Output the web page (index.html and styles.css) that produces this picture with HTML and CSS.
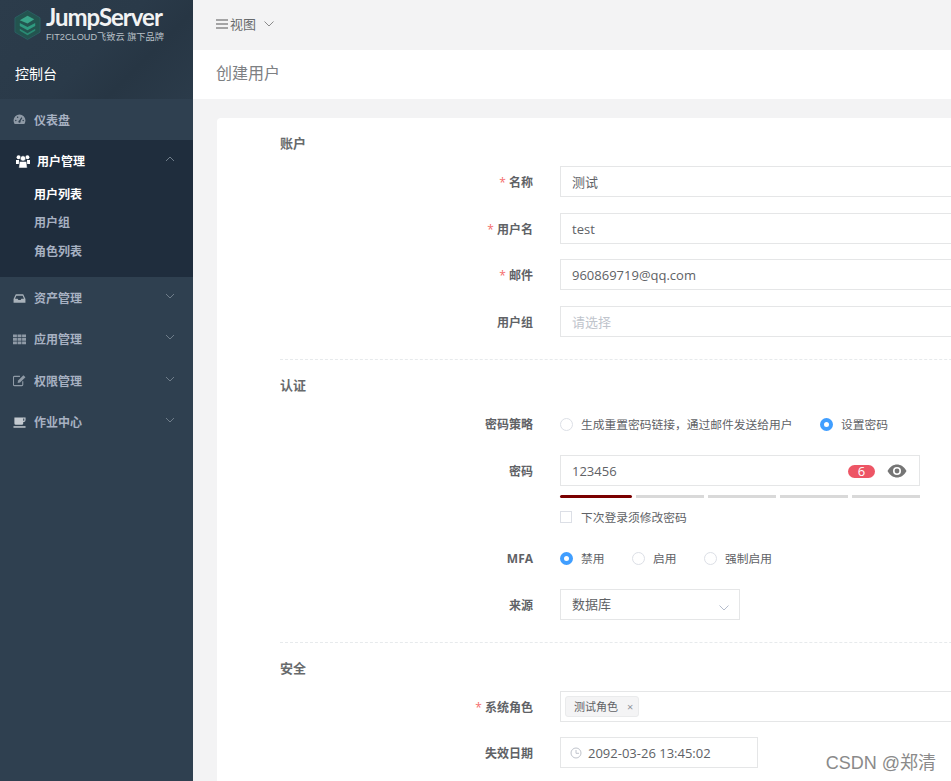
FILE: index.html
```html
<!DOCTYPE html>
<html>
<head>
    <title>创建用户</title>
    <link rel="stylesheet" href="styles.css">
</head>
<body>
    <div class="app">
        <aside class="sidebar">
            <div class="side-head">
                <div class="logo">
                    <svg class="logo-mark" viewBox="0 0 28 32" width="27" height="32">
                        <path d="M14 1 L27 8.5 V23.5 L14 31 L1 23.5 V8.5 Z" fill="#23544f" stroke="#2b5f63" stroke-width="1"/>
                        <path d="M6 11 L14 6.5 L21 10 L14 14.5 Z" fill="#3aa58a"/>
                        <path d="M6 14 L14 18 L22 14 V17 L14 21.5 L6 17 Z" fill="#2f9a80"/>
                        <path d="M6 20 L14 24.5 L22 20 V22 L14 26.5 L6 22 Z" fill="#2a8a74"/>
                    </svg>
                    <div class="logo-text">
                        <div class="logo-name">JumpServer</div>
                        <div class="logo-sub">FIT2CLOUD飞致云 旗下品牌</div>
                    </div>
                </div>
                <div class="side-title">控制台</div>
            </div>
            <div class="menu-item">
                <svg class="menu-icon" viewBox="0 0 14 14"><path d="M7 1.5 A6.4 6.4 0 0 0 .6 7.9 C.6 9.6 1.1 10.8 1.8 11.8 H12.2 C12.9 10.8 13.4 9.6 13.4 7.9 A6.4 6.4 0 0 0 7 1.5 Z" fill="#8f9aa6"/><path d="M7 9 L9.5 5" stroke="#2f4050" stroke-width="1.2"/><circle cx="7" cy="9.4" r="1.2" fill="#2f4050"/><circle cx="3" cy="8.2" r=".8" fill="#2f4050"/><circle cx="11" cy="8.2" r=".8" fill="#2f4050"/><circle cx="5" cy="4.6" r=".8" fill="#2f4050"/></svg>
                <span>仪表盘</span>
            </div>
            <div class="menu-group">
                <div class="menu-item menu-open">
                    <svg class="menu-icon users" viewBox="0 0 14 13"><circle cx="2.6" cy="2.2" r="2" fill="#fff"/><circle cx="11.4" cy="2.2" r="2" fill="#fff"/><path d="M0 5 H3 V9 H0 Z M14 5 H11 V9 H14 Z" fill="#fff"/><circle cx="7" cy="3.4" r="2.7" fill="#fff" stroke="#1f2d3d" stroke-width=".6"/><path d="M3.4 6.4 H10.6 L11.2 13 H2.8 Z" fill="#fff" stroke="#1f2d3d" stroke-width=".5"/></svg>
                    <span>用户管理</span>
                    <svg class="arrow" viewBox="0 0 10 6"><path d="M1 5 L5 1 L9 5" fill="none" stroke="#6f7d8a" stroke-width="1"/></svg>
                </div>
                <div class="submenu">
                    <div class="sub-item sub-active">用户列表</div>
                    <div class="sub-item">用户组</div>
                    <div class="sub-item">角色列表</div>
                </div>
            </div>
            <div class="menu-item">
                <svg class="menu-icon" viewBox="0 0 14 14"><path d="M3 2.5 H11 L13.4 7.5 V11.5 H.6 V7.5 Z" fill="#a9b2ba"/><path d="M3.6 4 H10.4 L11.8 7.3 H9 L8.2 8.6 H5.8 L5 7.3 H2.2 Z" fill="#2f4050"/></svg>
                <span>资产管理</span>
                <svg class="arrow" viewBox="0 0 10 6"><path d="M1 1 L5 5 L9 1" fill="none" stroke="#6f7d8a" stroke-width="1"/></svg>
            </div>
            <div class="menu-item">
                <svg class="menu-icon" viewBox="0 0 14 14"><path d="M0 1.5 H4.2 V4.6 H0 Z M4.9 1.5 H9.1 V4.6 H4.9 Z M9.8 1.5 H14 V4.6 H9.8 Z M0 5.4 H4.2 V8.4 H0 Z M4.9 5.4 H9.1 V8.4 H4.9 Z M9.8 5.4 H14 V8.4 H9.8 Z M0 9.2 H4.2 V12.2 H0 Z M4.9 9.2 H9.1 V12.2 H4.9 Z M9.8 9.2 H14 V12.2 H9.8 Z" fill="#8f9aa6"/></svg>
                <span>应用管理</span>
                <svg class="arrow" viewBox="0 0 10 6"><path d="M1 1 L5 5 L9 1" fill="none" stroke="#6f7d8a" stroke-width="1"/></svg>
            </div>
            <div class="menu-item">
                <svg class="menu-icon" viewBox="0 0 14 14"><path d="M10.5 7.8 V11.5 A1 1 0 0 1 9.5 12.5 H1.5 A1 1 0 0 1 .5 11.5 V3.5 A1 1 0 0 1 1.5 2.5 H7.5" fill="none" stroke="#8f9aa6" stroke-width="1.2"/><path d="M5 9.6 L5.5 7 L11.2 1.3 L13.4 3.5 L7.6 9.2 Z" fill="#8f9aa6"/></svg>
                <span>权限管理</span>
                <svg class="arrow" viewBox="0 0 10 6"><path d="M1 1 L5 5 L9 1" fill="none" stroke="#6f7d8a" stroke-width="1"/></svg>
            </div>
            <div class="menu-item">
                <svg class="menu-icon" viewBox="0 0 14 14"><path d="M1.5 1.5 H13.5 V4.2 A2.3 2.3 0 0 1 11 6.5 V8 A1.5 1.5 0 0 1 9.5 9.5 H3 A1.5 1.5 0 0 1 1.5 8 Z" fill="#c4cad0"/><path d="M11 2.8 H12.2 V5 H11 Z" fill="#2f4050"/><path d="M.5 11 H13.5 V12.6 H.5 Z" fill="#c4cad0"/></svg>
                <span>作业中心</span>
                <svg class="arrow" viewBox="0 0 10 6"><path d="M1 1 L5 5 L9 1" fill="none" stroke="#6f7d8a" stroke-width="1"/></svg>
            </div>
        </aside>
        <main class="main">
            <div class="topbar">
                <svg class="bars" viewBox="0 0 12 10" width="12" height="10"><path d="M0 1 H12 M0 5 H12 M0 9 H12" stroke="#8a8a8a" stroke-width="1.5"/></svg>
                <span>视图</span>
                <svg class="top-arrow" viewBox="0 0 10 6" width="10" height="6"><path d="M.5 .5 L5 5 L9.5 .5" fill="none" stroke="#8a8a8a" stroke-width="1"/></svg>
            </div>
            <div class="page-head">创建用户</div>
            <div class="content">
                <form class="card">
                    <h3 class="section-title">账户</h3>
                    <div class="row">
                        <label class="row-label"><em>*</em> 名称</label>
                        <div class="field"><div class="input">测试</div></div>
                    </div>
                    <div class="row">
                        <label class="row-label"><em>*</em> 用户名</label>
                        <div class="field"><div class="input">test</div></div>
                    </div>
                    <div class="row">
                        <label class="row-label"><em>*</em> 邮件</label>
                        <div class="field"><div class="input">960869719@qq.com</div></div>
                    </div>
                    <div class="row">
                        <label class="row-label">用户组</label>
                        <div class="field"><div class="input placeholder">请选择</div></div>
                    </div>
                    <div class="divider"></div>

                    <h3 class="section-title">认证</h3>
                    <div class="row row-radio">
                        <label class="row-label">密码策略</label>
                        <div class="radios">
                            <span class="radio"><i class="dot"></i>生成重置密码链接，通过邮件发送给用户</span>
                            <span class="radio"><i class="dot dot-on"></i>设置密码</span>
                        </div>
                    </div>
                    <div class="row row-password">
                        <label class="row-label">密码</label>
                        <div class="field-short">
                            <div class="input password">
                                <span>123456</span>
                                <span class="badge">6</span>
                                <svg class="eye" viewBox="0 0 20 14" width="20" height="14"><path d="M0.5 7 C3 2.5 6.5 .5 10 .5 C13.5 .5 17 2.5 19.5 7 C17 11.5 13.5 13.5 10 13.5 C6.5 13.5 3 11.5 .5 7 Z" fill="#757575"/><circle cx="10" cy="7" r="4" fill="#fff"/><circle cx="10" cy="7" r="2.4" fill="#757575"/></svg>
                            </div>
                            <div class="strength">
                                <i class="level level-on"></i><i class="level"></i><i class="level"></i><i class="level"></i><i class="level"></i>
                            </div>
                            <div class="check"><i class="box"></i>下次登录须修改密码</div>
                        </div>
                    </div>
                    <div class="row row-radio row-mfa">
                        <label class="row-label">MFA</label>
                        <div class="radios">
                            <span class="radio"><i class="dot dot-on"></i>禁用</span>
                            <span class="radio"><i class="dot"></i>启用</span>
                            <span class="radio"><i class="dot"></i>强制启用</span>
                        </div>
                    </div>
                    <div class="row">
                        <label class="row-label">来源</label>
                        <div class="input select">
                            <span>数据库</span>
                            <svg viewBox="0 0 10 6" width="10" height="6"><path d="M.5 .5 L5 5 L9.5 .5" fill="none" stroke="#b4bccc" stroke-width="1"/></svg>
                        </div>
                    </div>
                    <div class="divider"></div>

                    <h3 class="section-title">安全</h3>
                    <div class="row">
                        <label class="row-label"><em>*</em> 系统角色</label>
                        <div class="field"><div class="input tags"><span class="tag">测试角色<b>×</b></span></div></div>
                    </div>
                    <div class="row">
                        <label class="row-label">失效日期</label>
                        <div class="input date">
                            <svg viewBox="0 0 12 12" width="12" height="12"><circle cx="6" cy="6" r="5" fill="none" stroke="#c0c4cc" stroke-width="1"/><path d="M6 3 V6.3 H9" fill="none" stroke="#c0c4cc" stroke-width="1"/></svg>
                            <span>2092-03-26 13:45:02</span>
                        </div>
                    </div>
                </form>
            </div>
        </main>
    </div>
    <div class="watermark">CSDN @郑清</div>
</body>
</html>
```

FILE: styles.css
```css
html, body {
    margin: 0;
    padding: 0;
    height: 781px;
    overflow: hidden;
}
body {
    font-family: "Open Sans", "Noto Sans CJK SC", sans-serif;
    font-size: 13px;
    color: #606266;
    background: #f3f3f4;
}
.app {
    display: flex;
    height: 781px;
}

/* sidebar */
.sidebar {
    width: 193px;
    flex: none;
    background: #2f4050;
    color: #a7b1c2;
    font-weight: 600;
}
.side-head {
    height: 99px;
    box-sizing: border-box;
    padding-top: 5px;
    background: linear-gradient(135deg, #2c3c4b 0%, #2a3a49 50%, #273644 70%, #2b3b4a 100%);
}
.logo {
    display: flex;
    align-items: flex-start;
    gap: 5px;
    padding-left: 14px;
}
.logo-mark {
    flex: none;
    margin-top: 4px;
}
.logo-name {
    font-family: "Lato", sans-serif;
    font-size: 24px;
    line-height: 24px;
    font-weight: 700;
    letter-spacing: -1px;
    color: #f2f3f4;
}
.logo-sub {
    margin-top: 3px;
    font-family: "Liberation Sans", "Noto Sans CJK SC", sans-serif;
    font-size: 9.2px;
    line-height: 11px;
    font-weight: 400;
    color: #b9c0c7;
    white-space: nowrap;
}
.side-title {
    margin-top: 21px;
    padding-left: 15px;
    font-size: 14px;
    font-weight: 400;
    line-height: 20px;
    color: #fff;
}
.menu-item {
    display: flex;
    align-items: center;
    height: 41.4px;
    padding: 0 18px 0 13px;
    font-size: 12px;
}
.menu-item span {
    flex: 1;
}
.menu-icon {
    width: 13px;
    height: 13px;
    margin-right: 8px;
    flex: none;
}
.arrow {
    width: 10px;
    height: 6px;
    margin-bottom: 4px;
}
.menu-group {
    background: #1f2d3d;
    height: 137px;
}
.menu-open {
    padding-left: 16px;
    color: #fff;
}
.menu-open .users {
    width: 14px;
    height: 13px;
    margin-right: 7px;
}
.sub-item {
    height: 28.5px;
    line-height: 28px;
    padding-left: 34px;
    font-size: 12px;
}
.submenu {
    margin-top: -1px;
}
.sub-active {
    color: #fff;
}

/* main area */
.main {
    flex: 1;
    min-width: 0;
}
.topbar {
    display: flex;
    align-items: center;
    height: 50px;
    box-sizing: border-box;
    padding: 0 0 3px 23px;
    color: #676a6c;
}
.bars {
    margin-right: 2px;
}
.top-arrow {
    margin-left: 8px;
}
.page-head {
    height: 49px;
    line-height: 46px;
    padding-left: 23px;
    background: #fff;
    font-size: 16px;
    color: #7d8083;
}
.content {
    padding: 19px 0 0 24px;
}
.card {
    width: 900px;
    height: 700px;
    box-sizing: border-box;
    background: #fff;
    border-radius: 4px;
    padding: 14px 0 0 63px;
}
.section-title {
    margin: 0 0 12px;
    font-size: 13px;
    line-height: 22px;
    font-weight: 700;
    color: #676a6c;
}

/* form rows */
.row {
    display: flex;
    align-items: flex-start;
    margin-bottom: 15.7px;
}
.row-label {
    width: 253px;
    height: 31px;
    flex: none;
    margin-right: 27px;
    text-align: right;
    line-height: 33px;
    font-weight: 700;
    font-size: 12px;
    color: #606266;
}
.row-label em {
    font-style: normal;
    font-weight: 400;
    color: #f56c6c;
}
.field {
    flex: 1;
}
.field-short {
    width: 360px;
}
.input {
    height: 31px;
    box-sizing: border-box;
    border: 1px solid #e5e6e7;
    padding: 0 11px;
    line-height: 31px;
    color: #606266;
}
.placeholder {
    color: #c0c4cc;
}
.divider {
    margin: 22px 0 14px;
    border-top: 1px dashed #e7eaec;
}
.radios {
    display: flex;
    gap: 27.5px;
    height: 31px;
    box-sizing: border-box;
    padding-top: 2px;
    line-height: 29px;
    font-size: 11.75px;
}
.radio {
    display: flex;
    align-items: center;
}
.dot {
    width: 13px;
    height: 13px;
    box-sizing: border-box;
    margin-right: 8px;
    border: 1px solid #dcdfe6;
    border-radius: 50%;
}
.dot-on {
    border: 4px solid #409eff;
    background: #fff;
}
.row-radio {
    margin-bottom: 16px;
}
.row-password {
    margin-bottom: 15.7px;
}
.password {
    display: flex;
    align-items: center;
    padding-top: 1px;
}
.password span:first-child {
    flex: 1;
}
.badge {
    width: 27px;
    height: 13px;
    margin-right: 12px;
    border-radius: 7px;
    background: #ed5565;
    color: #fff;
    text-align: center;
    line-height: 13px;
}
.eye {
    margin-right: 1px;
}
.strength {
    display: flex;
    gap: 4px;
    margin-top: 9px;
}
.level {
    flex: 1;
    height: 3px;
    background: #d9d9d9;
}
.level-on {
    flex: none;
    width: 72px;
    background: #7a0000;
    border-radius: 2px;
}
.check {
    display: flex;
    align-items: center;
    margin-top: 10px;
    line-height: 18px;
    font-size: 11.75px;
}
.box {
    width: 12px;
    height: 12px;
    box-sizing: border-box;
    margin-right: 9px;
    border: 1px solid #dcdfe6;
}
.select {
    display: flex;
    align-items: center;
    justify-content: space-between;
    width: 180px;
    padding-top: 1px;
    padding-right: 10px;
}
.select svg {
    margin-top: 7px;
}
.tags {
    display: flex;
    align-items: center;
    padding-left: 4px;
}
.tag {
    height: 21px;
    padding: 0 5px 0 8px;
    line-height: 19px;
    font-size: 11px;
    background: #f4f4f5;
    border: 1px solid #eaebec;
    border-radius: 3px;
    box-sizing: border-box;
}
.tag b {
    margin-left: 9px;
    font-weight: 400;
    color: #909399;
}
.date {
    display: flex;
    align-items: center;
    gap: 6px;
    width: 198px;
    padding-top: 1px;
    padding-left: 9px;
}

.watermark {
    position: absolute;
    right: 15px;
    bottom: 7px;
    font-family: "Liberation Sans", "Noto Sans CJK SC", sans-serif;
    font-size: 18px;
    color: #8a8a8a;
    background: rgba(255, 255, 255, .7);
}
```
